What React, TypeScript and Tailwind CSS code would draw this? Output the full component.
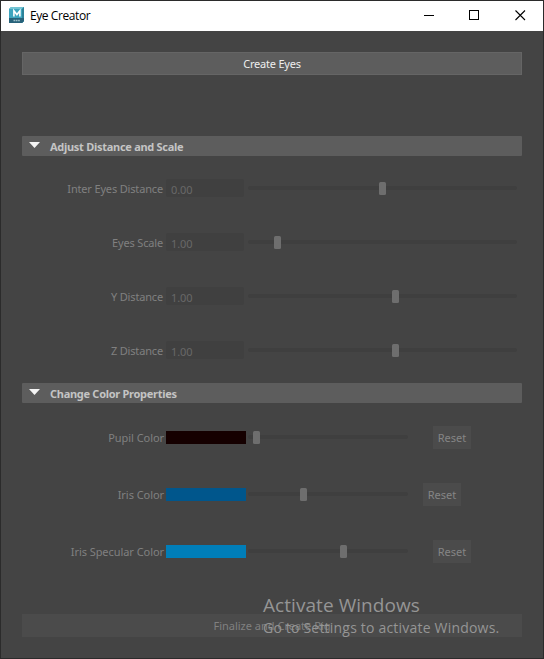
import React from "react";

const distanceRows = [
  { label: "Inter Eyes Distance", value: "0.00", handle: 131 },
  { label: "Eyes Scale", value: "1.00", handle: 26 },
  { label: "Y Distance", value: "1.00", handle: 144 },
  { label: "Z Distance", value: "1.00", handle: 144 },
];

const colorRows = [
  { label: "Pupil Color", swatch: "bg-[#150000]", handle: 5, gap: "ml-[25px]" },
  { label: "Iris Color", swatch: "bg-[#00568c]", handle: 52, gap: "ml-[15px]" },
  { label: "Iris Specular Color", swatch: "bg-[#007eb9]", handle: 92, gap: "ml-[25px]" },
];

function Slider({ width, handle }: { width: string; handle: number }) {
  return (
    <div className={`relative h-[13px] shrink-0 pt-[4px] ${width}`}>
      <div className="h-[4px] w-full rounded-sm bg-[#3f3f3f]" />
      <div
        className="absolute top-0 h-[13px] w-[7px] rounded-[1.5px] bg-[#6e6e6e]"
        style={{ left: handle }}
      />
    </div>
  );
}

function SectionHeader({ title }: { title: string }) {
  return (
    <div className="flex h-[20px] w-[500px] shrink-0 rounded-[1px] bg-[#5d5d5d]">
      <svg className="ml-[7px] mt-[6px] h-[6px] w-[11px]" viewBox="0 0 11 6">
        <path d="M0 0H11L5.5 6Z" fill="#f4f4f4" />
      </svg>
      <span className="ml-[10px] mt-px text-[11px] leading-[20px] font-bold tracking-[-0.28px] whitespace-nowrap text-[#c4c4c4]">
        {title}
      </span>
    </div>
  );
}

function TitleBar() {
  return (
    <div className="flex h-[30px] shrink-0 items-center bg-white text-black">
      <svg className="mb-[2px] ml-[8px] h-[16px] w-[16px] shrink-0" viewBox="0 0 16 16">
        <path d="M2 0H15V14L13 16H0V2Z" fill="#3fa5be" />
        <path d="M2 0H15L13 2H0Z" fill="#72c4d3" />
        <path d="M13 2L15 0V14L13 16Z" fill="#2b8299" />
        <path d="M0 11H15V14L13 16H0Z" fill="#27627a" />
        <path d="M4.9 9.5V3.8L7.9 7.6L10.9 3.8V9.5" fill="none" stroke="#fff" strokeWidth="1.6" />
        <path d="M4.5 13.5H11" stroke="#9fc0ca" strokeWidth="1.6" strokeDasharray="1.7 .6" />
      </svg>
      <span className="ml-[5px] font-['Open_Sans','Noto_Sans',sans-serif] text-[12px] leading-[16px] tracking-[-0.42px] whitespace-nowrap">
        Eye Creator
      </span>
      <svg
        className="mb-px ml-auto mr-[17px] h-[11px] w-[104px] shrink-0"
        viewBox="0 0 104 11"
        fill="none"
        stroke="#000"
      >
        <path d="M2 5.5H12" />
        <rect x="47.5" y=".5" width="9" height="9" />
        <path d="M93.5 .5L103 10M103 .5L93.5 10" strokeWidth="1.1" />
      </svg>
    </div>
  );
}

export default function App() {
  return (
    <div className="relative h-[659px] w-[544px] overflow-hidden bg-[#2b2b2b] p-px font-['Noto_Sans','Open_Sans',sans-serif] text-[11px]">
      <div className="flex h-[657px] w-[542px] flex-col bg-[#444444]">
        <TitleBar />
        <div className="flex flex-col pl-[21px] pt-[21px]">
          <button className="h-[23px] w-[500px] border border-[#656565] bg-[#5d5d5d] pt-px leading-[20px] tracking-[-0.2px] text-[#eeeeee]">
            Create Eyes
          </button>
          <div className="mt-[61px]">
            <SectionHeader title="Adjust Distance and Scale" />
          </div>
          <div className="mt-[5px] flex flex-col">
            {distanceRows.map((row) => (
              <div key={row.label} className="flex h-[54px] items-center">
                <span className="w-[141px] pt-[2px] text-right leading-[16px] tracking-[-0.16px] whitespace-nowrap text-[#808080]">
                  {row.label}
                </span>
                <span className="ml-[3px] h-[18px] w-[78px] rounded-[2px] bg-[#404040] pl-[5px] pt-[2px] leading-[18px] tracking-[-0.1px] text-[#686868]">
                  {row.value}
                </span>
                <div className="ml-[4px] pt-px">
                  <Slider width="w-[269px]" handle={row.handle} />
                </div>
              </div>
            ))}
          </div>
          <div className="mt-[6px]">
            <SectionHeader title="Change Color Properties" />
          </div>
          <div className="mt-[6px] flex flex-col">
            {colorRows.map((row) => (
              <div key={row.label} className="flex h-[57px] items-center">
                <span className="w-[142px] text-right leading-[16px] tracking-[-0.06px] whitespace-nowrap text-[#808080]">
                  {row.label}
                </span>
                <span className={`ml-[2px] h-[13px] w-[80px] ${row.swatch}`} />
                <div className="ml-[2px]">
                  <Slider width="w-[160px]" handle={row.handle} />
                </div>
                <button
                  className={`h-[23px] w-[38px] bg-[#4b4b4b] leading-[23px] text-[#858585] ${row.gap}`}
                >
                  Reset
                </button>
              </div>
            ))}
          </div>
          <button className="mt-[34px] h-[23px] w-[500px] bg-[#4b4b4b] leading-[23px] text-[#808080]">
            Finalize and Create Rig
          </button>
        </div>
      </div>
      <div className="absolute left-[263px] top-[592px] flex flex-col font-['Open_Sans','Noto_Sans',sans-serif] whitespace-nowrap text-[#959595]">
        <span className="text-[19px] leading-[26px] tracking-[0.06px]">Activate Windows</span>
        <span className="text-[14px] leading-[20px] tracking-[0.2px]">Go to Settings to activate Windows.</span>
      </div>
    </div>
  );
}
